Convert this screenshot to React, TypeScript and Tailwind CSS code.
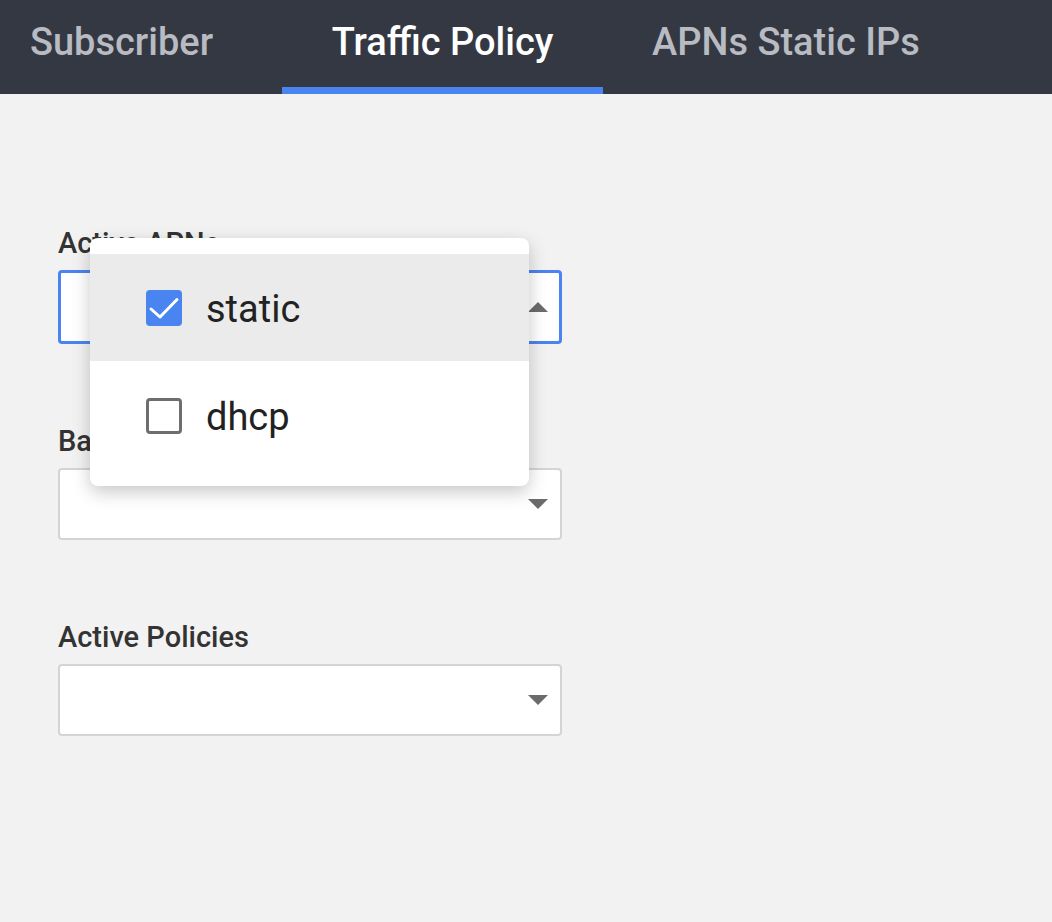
import React from 'react';

const tabs = ['Subscriber', 'Traffic Policy', 'APNs Static IPs'];

const Arrow = ({ up }: { up?: boolean }) => (
  <svg width="20" height="10" viewBox="0 0 20 10" className="text-[#6b6b6b]">
    {up ? <path d="M0 10 L10 0 L20 10 Z" fill="currentColor" /> : <path d="M0 0 L10 10 L20 0 Z" fill="currentColor" />}
  </svg>
);

const Field = ({ label, focused, up }: { label: string; focused?: boolean; up?: boolean }) => (
  <div className="flex flex-col">
    <label className="text-[29px] font-medium text-[#333] leading-none mb-[12px]">{label}</label>
    <div
      className={
        focused
          ? 'h-[74px] w-[504px] rounded-[4px] border-[3px] border-[#4a84f0] bg-white flex items-center justify-end pr-[11px]'
          : 'h-[72px] w-[504px] rounded-[4px] border-2 border-[#d4d4d4] bg-white flex items-center justify-end pr-[12px]'
      }
    >
      <Arrow up={up} />
    </div>
  </div>
);

export default function App() {
  return (
    <div className="min-h-[922px] bg-[#f2f2f2]" style={{ fontFamily: 'Roboto, "Liberation Sans", sans-serif' }}>
      <div className="h-[94px] bg-[#343843] flex ml-[-39px]">
        {tabs.map((t, i) => (
          <div key={t} className="relative min-w-[321px] px-[49px] pb-[10px] flex items-center justify-center">
            <span className={i === 1 ? 'text-[38px] font-medium text-white' : 'text-[38px] font-medium text-[#b8bbc1]'}>{t}</span>
            {i === 1 && <div className="absolute left-0 right-0 bottom-0 h-[7px] bg-[#4a84f0]" />}
          </div>
        ))}
      </div>

      <div className="relative pl-[58px] pt-[135px] flex flex-col gap-[83px]">
        <Field label="Active APNs" focused up />
        <Field label="Base Names" />
        <Field label="Active Policies" />

        {/* dropdown menu */}
        <div className="absolute left-[90px] top-[144px] w-[439px] rounded-[8px] bg-white py-[16px] shadow-[0_6px_18px_rgba(0,0,0,0.22)]">
          <div className="h-[107px] bg-[#ebebeb] flex items-center pl-[56px]">
            <div className="w-[36px] h-[36px] rounded-[4px] bg-[#4a84f0]">
              <svg width="36" height="36" viewBox="0 0 36 36" fill="none">
                <path d="M5 19 L14 27 L31 9.5" stroke="white" strokeWidth="3" strokeLinecap="round" strokeLinejoin="round" />
              </svg>
            </div>
            <span className="ml-[24px] text-[38px] text-[#222] pt-[3px]">static</span>
          </div>
          <div className="h-[109px] flex items-center pl-[56px]">
            <div className="w-[36px] h-[36px] rounded-[4px] border-[3px] border-[#6e6e6e] bg-white" />
            <span className="ml-[24px] text-[38px] text-[#222] pt-[3px]">dhcp</span>
          </div>
        </div>
      </div>
    </div>
  );
}
